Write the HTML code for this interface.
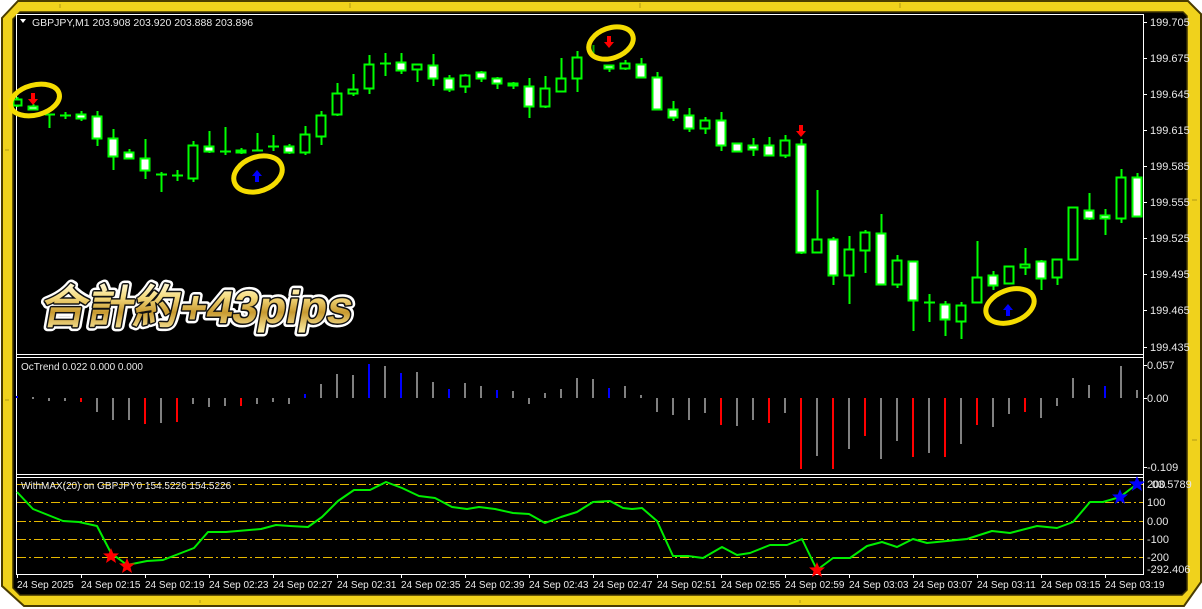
<!DOCTYPE html>
<html><head><meta charset="utf-8"><style>
html,body{margin:0;padding:0;background:#fff;}
svg{display:block;}
text{font-family:"Liberation Sans",sans-serif;}
</style></head><body>
<svg width="1202" height="609" viewBox="0 0 1202 609" xmlns="http://www.w3.org/2000/svg">
<defs>
<linearGradient id="gold" x1="0" y1="0" x2="0" y2="1">
<stop offset="0" stop-color="#fffbe0"/><stop offset="0.3" stop-color="#f6dc80"/><stop offset="0.6" stop-color="#c89a30"/><stop offset="1" stop-color="#fff0a8"/>
</linearGradient>
<path id="star" d="M0,-8 L2.2,-2.6 8,-2.5 3.5,1.2 5,7 0,3.6 -5,7 -3.5,1.2 -8,-2.5 -2.2,-2.6Z"/>
</defs>
<polygon points="18,1 1188,1 1201,14 1201,582 1184,606 24,606 2,586 2,18" fill="#f0d21c" stroke="#4a3c00" stroke-width="2"/>
<polygon points="20,12 1183,12 1187,16 1187,590 1182,595 20,595 13,588 13,19" fill="#000" stroke="#3a3000" stroke-width="1.5"/>
<g stroke="#8a7410" stroke-width="1" opacity="0.6">
<line x1="60" y1="4" x2="60" y2="8"/><line x1="350" y1="3" x2="350" y2="8"/><line x1="640" y1="3" x2="640" y2="8"/><line x1="900" y1="3" x2="900" y2="8"/>
<line x1="5" y1="150" x2="9" y2="150"/><line x1="5" y1="400" x2="9" y2="400"/><line x1="1192" y1="200" x2="1197" y2="200"/><line x1="1192" y1="440" x2="1197" y2="440"/>
<line x1="200" y1="600" x2="200" y2="603"/><line x1="800" y1="600" x2="800" y2="603"/>
</g>
<g stroke="#fff" stroke-width="1" fill="none" shape-rendering="crispEdges">
<polyline points="16.5,14.5 1143.5,14.5 1143.5,574.5 16.5,574.5 16.5,14.5"/>
<line x1="16" y1="354.5" x2="1144" y2="354.5"/><line x1="16" y1="357.5" x2="1144" y2="357.5"/>
<line x1="16" y1="474.5" x2="1144" y2="474.5"/><line x1="16" y1="477.5" x2="1144" y2="477.5"/>
</g>
<g stroke="#fff" stroke-width="1" shape-rendering="crispEdges">
<line x1="1143" y1="22.5" x2="1147" y2="22.5"/><line x1="1143" y1="58.5" x2="1147" y2="58.5"/><line x1="1143" y1="94.5" x2="1147" y2="94.5"/><line x1="1143" y1="130.5" x2="1147" y2="130.5"/><line x1="1143" y1="166.5" x2="1147" y2="166.5"/><line x1="1143" y1="202.5" x2="1147" y2="202.5"/><line x1="1143" y1="238.5" x2="1147" y2="238.5"/><line x1="1143" y1="274.5" x2="1147" y2="274.5"/><line x1="1143" y1="310.5" x2="1147" y2="310.5"/><line x1="1143" y1="347.5" x2="1147" y2="347.5"/>
<line x1="1143" y1="365.5" x2="1147" y2="365.5"/><line x1="1143" y1="398.5" x2="1147" y2="398.5"/><line x1="1143" y1="467.5" x2="1147" y2="467.5"/>
</g>
<g fill="#e8e8e8" font-size="11">
<text x="1150" y="26">199.705</text><text x="1150" y="62">199.675</text><text x="1150" y="98">199.645</text><text x="1150" y="134">199.615</text><text x="1150" y="170">199.585</text><text x="1150" y="206">199.555</text><text x="1150" y="242">199.525</text><text x="1150" y="278">199.495</text><text x="1150" y="314">199.465</text><text x="1150" y="351">199.435</text>
<text x="1147" y="369">0.057</text><text x="1147" y="402">0.00</text><text x="1147" y="471">-0.109</text>
<text x="1147" y="488">200</text><text x="1152" y="488">03.5789</text><text x="1147" y="506">100</text><text x="1147" y="525">0.00</text><text x="1147" y="543">-100</text><text x="1147" y="561">-200</text><text x="1147" y="573">-292.406</text>
</g>
<polygon points="20,19 26,19 23,23" fill="#fff"/>
<text x="32" y="26" fill="#e8e8e8" font-size="10.5">GBPJPY,M1  203.908 203.920 203.888 203.896</text>
<text x="21" y="370" fill="#e8e8e8" font-size="10">OcTrend 0.022 0.000 0.000</text>
<g stroke="#00ff00" stroke-width="1.6" shape-rendering="crispEdges">
<line x1="17.5" y1="97" x2="17.5" y2="107"/><rect x="13.5" y="99.5" width="8" height="6" fill="#000"/>
<line x1="33.5" y1="104" x2="33.5" y2="110"/><rect x="28.5" y="106.5" width="9" height="3" fill="#fff"/>
<line x1="49.5" y1="114" x2="49.5" y2="128"/><line x1="45" y1="114.5" x2="55" y2="114.5"/>
<line x1="65.5" y1="112" x2="65.5" y2="119"/><line x1="60" y1="115.5" x2="71" y2="115.5"/>
<line x1="81.5" y1="111" x2="81.5" y2="121"/><rect x="76.5" y="114.5" width="9" height="4" fill="#fff"/>
<line x1="97.5" y1="111" x2="97.5" y2="146"/><rect x="92.5" y="116.5" width="9" height="22" fill="#fff"/>
<line x1="113.5" y1="129" x2="113.5" y2="170"/><rect x="108.5" y="138.5" width="9" height="18" fill="#fff"/>
<line x1="129.5" y1="149" x2="129.5" y2="159"/><rect x="124.5" y="152.5" width="9" height="6" fill="#fff"/>
<line x1="145.5" y1="139" x2="145.5" y2="179"/><rect x="140.5" y="158.5" width="9" height="12" fill="#fff"/>
<line x1="161.5" y1="172" x2="161.5" y2="192"/><line x1="156" y1="174.5" x2="167" y2="174.5"/>
<line x1="177.5" y1="170" x2="177.5" y2="181"/><line x1="172" y1="175.5" x2="183" y2="175.5"/>
<line x1="193.5" y1="141" x2="193.5" y2="182"/><rect x="188.5" y="145.5" width="9" height="33" fill="#000"/>
<line x1="209.5" y1="131" x2="209.5" y2="153"/><rect x="204.5" y="146.5" width="9" height="5" fill="#fff"/>
<line x1="225.5" y1="127" x2="225.5" y2="155"/><line x1="220" y1="151.5" x2="231" y2="151.5"/>
<line x1="241.5" y1="148" x2="241.5" y2="154"/><rect x="236.5" y="150.5" width="9" height="2" fill="#fff"/>
<line x1="257.5" y1="133" x2="257.5" y2="151"/><line x1="252" y1="150.5" x2="263" y2="150.5"/>
<line x1="273.5" y1="135" x2="273.5" y2="151"/><line x1="268" y1="146.5" x2="279" y2="146.5"/>
<line x1="289.5" y1="144" x2="289.5" y2="154"/><rect x="284.5" y="146.5" width="9" height="6" fill="#fff"/>
<line x1="305.5" y1="126" x2="305.5" y2="155"/><rect x="300.5" y="134.5" width="9" height="18" fill="#000"/>
<line x1="321.5" y1="111" x2="321.5" y2="145"/><rect x="316.5" y="115.5" width="9" height="21" fill="#000"/>
<line x1="337.5" y1="83" x2="337.5" y2="116"/><rect x="332.5" y="93.5" width="9" height="21" fill="#000"/>
<line x1="353.5" y1="74" x2="353.5" y2="96"/><rect x="348.5" y="89.5" width="9" height="4" fill="#000"/>
<line x1="369.5" y1="55" x2="369.5" y2="94"/><rect x="364.5" y="64.5" width="9" height="24" fill="#000"/>
<line x1="385.5" y1="53" x2="385.5" y2="76"/><line x1="380" y1="63.5" x2="391" y2="63.5"/>
<line x1="401.5" y1="53" x2="401.5" y2="74"/><rect x="396.5" y="62.5" width="9" height="8" fill="#fff"/>
<line x1="417.5" y1="64" x2="417.5" y2="82"/><rect x="412.5" y="64.5" width="9" height="5" fill="#000"/>
<line x1="433.5" y1="54" x2="433.5" y2="86"/><rect x="428.5" y="65.5" width="9" height="13" fill="#fff"/>
<line x1="449.5" y1="75" x2="449.5" y2="92"/><rect x="444.5" y="78.5" width="9" height="11" fill="#fff"/>
<line x1="465.5" y1="74" x2="465.5" y2="93"/><rect x="460.5" y="75.5" width="9" height="11" fill="#000"/>
<line x1="481.5" y1="71" x2="481.5" y2="82"/><rect x="476.5" y="72.5" width="9" height="6" fill="#fff"/>
<line x1="497.5" y1="77" x2="497.5" y2="89"/><rect x="492.5" y="78.5" width="9" height="5" fill="#fff"/>
<line x1="513.5" y1="82" x2="513.5" y2="89"/><rect x="508.5" y="83.5" width="9" height="2" fill="#fff"/>
<line x1="529.5" y1="78" x2="529.5" y2="118"/><rect x="524.5" y="86.5" width="9" height="20" fill="#fff"/>
<line x1="545.5" y1="76" x2="545.5" y2="108"/><rect x="540.5" y="88.5" width="9" height="18" fill="#000"/>
<line x1="561.5" y1="58" x2="561.5" y2="91"/><rect x="556.5" y="78.5" width="9" height="13" fill="#000"/>
<line x1="577.5" y1="51" x2="577.5" y2="92"/><rect x="572.5" y="57.5" width="9" height="21" fill="#000"/>
<line x1="593.5" y1="45" x2="593.5" y2="56" stroke="#0a0"/>
<line x1="609.5" y1="65" x2="609.5" y2="72"/><rect x="604.5" y="65.5" width="9" height="3" fill="#fff"/>
<line x1="625.5" y1="60" x2="625.5" y2="70"/><rect x="620.5" y="63.5" width="9" height="5" fill="#000"/>
<line x1="641.5" y1="58" x2="641.5" y2="77"/><rect x="636.5" y="64.5" width="9" height="13" fill="#fff"/>
<line x1="657.5" y1="72" x2="657.5" y2="110"/><rect x="652.5" y="77.5" width="9" height="32" fill="#fff"/>
<line x1="673.5" y1="101" x2="673.5" y2="121"/><rect x="668.5" y="109.5" width="9" height="8" fill="#fff"/>
<line x1="689.5" y1="108" x2="689.5" y2="132"/><rect x="684.5" y="115.5" width="9" height="13" fill="#fff"/>
<line x1="705.5" y1="117" x2="705.5" y2="134"/><rect x="700.5" y="120.5" width="9" height="8" fill="#000"/>
<line x1="721.5" y1="112" x2="721.5" y2="151"/><rect x="716.5" y="120.5" width="9" height="25" fill="#fff"/>
<line x1="737.5" y1="143" x2="737.5" y2="151"/><rect x="732.5" y="143.5" width="9" height="8" fill="#fff"/>
<line x1="753.5" y1="138" x2="753.5" y2="156"/><rect x="748.5" y="145.5" width="9" height="4" fill="#fff"/>
<line x1="769.5" y1="137" x2="769.5" y2="155"/><rect x="764.5" y="145.5" width="9" height="10" fill="#fff"/>
<line x1="785.5" y1="135" x2="785.5" y2="158"/><rect x="780.5" y="140.5" width="9" height="15" fill="#000"/>
<line x1="801.5" y1="139" x2="801.5" y2="254"/><rect x="796.5" y="144.5" width="9" height="108" fill="#fff"/>
<line x1="817.5" y1="190" x2="817.5" y2="252"/><rect x="812.5" y="239.5" width="9" height="13" fill="#000"/>
<line x1="833.5" y1="237" x2="833.5" y2="285"/><rect x="828.5" y="239.5" width="9" height="36" fill="#fff"/>
<line x1="849.5" y1="236" x2="849.5" y2="304"/><rect x="844.5" y="249.5" width="9" height="26" fill="#000"/>
<line x1="865.5" y1="230" x2="865.5" y2="273"/><rect x="860.5" y="232.5" width="9" height="18" fill="#000"/>
<line x1="881.5" y1="214" x2="881.5" y2="284"/><rect x="876.5" y="233.5" width="9" height="51" fill="#fff"/>
<line x1="897.5" y1="255" x2="897.5" y2="288"/><rect x="892.5" y="260.5" width="9" height="24" fill="#000"/>
<line x1="913.5" y1="261" x2="913.5" y2="331"/><rect x="908.5" y="261.5" width="9" height="39" fill="#fff"/>
<line x1="929.5" y1="294" x2="929.5" y2="322"/><line x1="924" y1="302.5" x2="935" y2="302.5"/>
<line x1="945.5" y1="301" x2="945.5" y2="336"/><rect x="940.5" y="304.5" width="9" height="15" fill="#fff"/>
<line x1="961.5" y1="302" x2="961.5" y2="339"/><rect x="956.5" y="305.5" width="9" height="16" fill="#000"/>
<line x1="977.5" y1="241" x2="977.5" y2="302"/><rect x="972.5" y="277.5" width="9" height="25" fill="#000"/>
<line x1="993.5" y1="271" x2="993.5" y2="290"/><rect x="988.5" y="275.5" width="9" height="10" fill="#fff"/>
<line x1="1009.5" y1="266" x2="1009.5" y2="284"/><rect x="1004.5" y="266.5" width="9" height="17" fill="#000"/>
<line x1="1025.5" y1="248" x2="1025.5" y2="275"/><rect x="1020.5" y="264.5" width="9" height="3" fill="#000"/>
<line x1="1041.5" y1="260" x2="1041.5" y2="290"/><rect x="1036.5" y="261.5" width="9" height="17" fill="#fff"/>
<line x1="1057.5" y1="259" x2="1057.5" y2="285"/><rect x="1052.5" y="259.5" width="9" height="18" fill="#000"/>
<line x1="1073.5" y1="207" x2="1073.5" y2="260"/><rect x="1068.5" y="207.5" width="9" height="52" fill="#000"/>
<line x1="1089.5" y1="193" x2="1089.5" y2="220"/><rect x="1084.5" y="210.5" width="9" height="8" fill="#fff"/>
<line x1="1105.5" y1="209" x2="1105.5" y2="235"/><rect x="1100.5" y="215.5" width="9" height="3" fill="#fff"/>
<line x1="1121.5" y1="169" x2="1121.5" y2="223"/><rect x="1116.5" y="177.5" width="9" height="41" fill="#000"/>
<line x1="1137.5" y1="173" x2="1137.5" y2="216"/><rect x="1132.5" y="177.5" width="9" height="39" fill="#fff"/>
</g>
<g fill="#ff0000">
<path d="M31,93 h4 v6 h3 l-5,6 l-5,-6 h3z"/>
<path d="M607,36 h4 v6 h3 l-5,6 l-5,-6 h3z"/>
<path d="M799,125 h4 v6 h3 l-5,6 l-5,-6 h3z"/>
</g>
<g fill="#0000ff">
<path d="M255,182 h4 v-6 h3 l-5,-6 l-5,6 h3z"/>
<path d="M1006,316 h4 v-6 h3 l-5,-6 l-5,6 h3z"/>
</g>
<g fill="none" stroke="#f5dc00" stroke-width="5">
<ellipse cx="35" cy="100" rx="25" ry="15" transform="rotate(-15 35 100)"/>
<ellipse cx="258" cy="174" rx="25" ry="17" transform="rotate(-20 258 174)"/>
<ellipse cx="611" cy="43" rx="23" ry="15" transform="rotate(-20 611 43)"/>
<ellipse cx="1010" cy="306" rx="25" ry="16" transform="rotate(-20 1010 306)"/>
</g>
<g transform="translate(40,323) skewX(-10)">
<text x="0" y="0" font-family="'Liberation Serif','Noto Serif CJK SC',serif" font-weight="bold" font-size="46" fill="none" stroke="#fff" stroke-width="8" stroke-linejoin="round">合計約+43pips</text>
<text x="0" y="0" font-family="'Liberation Serif','Noto Serif CJK SC',serif" font-weight="bold" font-size="46" fill="none" stroke="#111" stroke-width="3" stroke-linejoin="round">合計約+43pips</text>
<text x="0" y="0" font-family="'Liberation Serif','Noto Serif CJK SC',serif" font-weight="bold" font-size="46" fill="url(#gold)">合計約+43pips</text>
</g>
<g shape-rendering="crispEdges">
<g fill="#808080">
<rect x="32" y="397" width="2" height="2"/><rect x="48" y="398" width="2" height="3"/><rect x="64" y="398" width="2" height="3"/>
<rect x="96" y="398" width="2" height="14"/><rect x="112" y="398" width="2" height="22"/><rect x="128" y="398" width="2" height="22"/><rect x="160" y="398" width="2" height="25"/>
<rect x="192" y="398" width="2" height="6"/><rect x="208" y="398" width="2" height="9"/><rect x="224" y="398" width="2" height="8"/><rect x="256" y="398" width="2" height="6"/><rect x="272" y="398" width="2" height="4"/><rect x="288" y="398" width="2" height="6"/>
<rect x="320" y="384" width="2" height="14"/><rect x="336" y="374" width="2" height="24"/><rect x="352" y="375" width="2" height="23"/><rect x="384" y="366" width="2" height="32"/><rect x="416" y="372" width="2" height="26"/><rect x="432" y="382" width="2" height="16"/><rect x="464" y="383" width="2" height="15"/><rect x="480" y="386" width="2" height="12"/><rect x="512" y="391" width="2" height="7"/><rect x="528" y="398" width="2" height="6"/><rect x="544" y="393" width="2" height="5"/><rect x="560" y="389" width="2" height="9"/><rect x="576" y="378" width="2" height="20"/><rect x="592" y="379" width="2" height="19"/>
<rect x="624" y="386" width="2" height="12"/><rect x="640" y="395" width="2" height="3"/><rect x="656" y="398" width="2" height="14"/><rect x="672" y="398" width="2" height="17"/><rect x="688" y="398" width="2" height="22"/><rect x="704" y="398" width="2" height="15"/><rect x="736" y="398" width="2" height="28"/><rect x="752" y="398" width="2" height="22"/><rect x="784" y="398" width="2" height="15"/>
<rect x="816" y="398" width="2" height="58"/><rect x="848" y="398" width="2" height="51"/><rect x="880" y="398" width="2" height="61"/><rect x="896" y="398" width="2" height="43"/><rect x="928" y="398" width="2" height="55"/><rect x="960" y="398" width="2" height="46"/><rect x="992" y="398" width="2" height="29"/><rect x="1008" y="398" width="2" height="16"/><rect x="1040" y="398" width="2" height="20"/><rect x="1056" y="398" width="2" height="8"/>
<rect x="1072" y="378" width="2" height="20"/><rect x="1088" y="385" width="2" height="13"/><rect x="1120" y="366" width="2" height="32"/><rect x="1136" y="390" width="2" height="8"/>
</g>
<g fill="#ff0000">
<rect x="80" y="398" width="2" height="4"/><rect x="144" y="398" width="2" height="26"/><rect x="176" y="398" width="2" height="24"/><rect x="240" y="398" width="2" height="8"/>
<rect x="720" y="398" width="2" height="27"/><rect x="768" y="398" width="2" height="25"/><rect x="800" y="398" width="2" height="71"/><rect x="832" y="398" width="2" height="71"/><rect x="864" y="398" width="2" height="38"/><rect x="912" y="398" width="2" height="59"/><rect x="944" y="398" width="2" height="59"/><rect x="976" y="398" width="2" height="27"/><rect x="1024" y="398" width="2" height="14"/>
</g>
<g fill="#0000ff">
<rect x="16" y="396" width="2" height="2"/><rect x="304" y="394" width="2" height="4"/><rect x="368" y="364" width="2" height="34"/><rect x="400" y="373" width="2" height="25"/><rect x="448" y="389" width="2" height="9"/><rect x="496" y="390" width="2" height="8"/><rect x="608" y="388" width="2" height="10"/><rect x="1104" y="386" width="2" height="12"/>
</g>
</g>
<g stroke="#e6b800" stroke-width="1" stroke-dasharray="9,3,2,3" shape-rendering="crispEdges">
<line x1="17" y1="484.5" x2="1143" y2="484.5"/><line x1="17" y1="502.5" x2="1143" y2="502.5"/><line x1="17" y1="521.5" x2="1143" y2="521.5"/><line x1="17" y1="539.5" x2="1143" y2="539.5"/><line x1="17" y1="557.5" x2="1143" y2="557.5"/>
</g>
<text x="21" y="489" fill="#e8e8e8" font-size="10">WithMAX(20) on GBPJPY0 154.5226 154.5226</text>
<polyline fill="none" stroke="#00ee00" stroke-width="2" stroke-linejoin="round" points="17,492 33,509 63,521 79,522 97,526 111,553 127,565 147,561 163,560 194,548 208,532 226,532 261,529 276,525 290,526 308,527 322,517 338,501 354,490 370,490 386,482 402,488 419,496 435,498 452,507 467,509 479,507 495,509 513,513 529,514 545,523 561,517 577,512 593,502 610,501 623,508 632,509 642,508 657,521 673,556 688,556 703,558 722,547 737,555 750,553 770,545 787,545 802,539 817,570 833,558 850,558 867,546 882,542 897,547 913,539 927,543 947,541 967,539 992,531 1010,533 1037,526 1057,528 1073,522 1090,502 1103,502 1120,497 1137,484"/>
<g fill="#ff0000"><use href="#star" x="111" y="556"/><use href="#star" x="127" y="566"/><use href="#star" x="817" y="570"/></g>
<g fill="#0000ff"><use href="#star" x="1120" y="497"/><use href="#star" x="1137" y="484"/></g>
<g stroke="#fff" stroke-width="1" shape-rendering="crispEdges">
<line x1="17.5" y1="574" x2="17.5" y2="578"/><line x1="81.5" y1="574" x2="81.5" y2="578"/><line x1="145.5" y1="574" x2="145.5" y2="578"/><line x1="209.5" y1="574" x2="209.5" y2="578"/><line x1="273.5" y1="574" x2="273.5" y2="578"/><line x1="337.5" y1="574" x2="337.5" y2="578"/><line x1="401.5" y1="574" x2="401.5" y2="578"/><line x1="465.5" y1="574" x2="465.5" y2="578"/><line x1="529.5" y1="574" x2="529.5" y2="578"/><line x1="593.5" y1="574" x2="593.5" y2="578"/><line x1="657.5" y1="574" x2="657.5" y2="578"/><line x1="721.5" y1="574" x2="721.5" y2="578"/><line x1="785.5" y1="574" x2="785.5" y2="578"/><line x1="849.5" y1="574" x2="849.5" y2="578"/><line x1="913.5" y1="574" x2="913.5" y2="578"/><line x1="977.5" y1="574" x2="977.5" y2="578"/><line x1="1041.5" y1="574" x2="1041.5" y2="578"/><line x1="1105.5" y1="574" x2="1105.5" y2="578"/>
</g>
<g fill="#e8e8e8" font-size="10">
<text x="17" y="588">24 Sep 2025</text><text x="81" y="588">24 Sep 02:15</text><text x="145" y="588">24 Sep 02:19</text><text x="209" y="588">24 Sep 02:23</text><text x="273" y="588">24 Sep 02:27</text><text x="337" y="588">24 Sep 02:31</text><text x="401" y="588">24 Sep 02:35</text><text x="465" y="588">24 Sep 02:39</text><text x="529" y="588">24 Sep 02:43</text><text x="593" y="588">24 Sep 02:47</text><text x="657" y="588">24 Sep 02:51</text><text x="721" y="588">24 Sep 02:55</text><text x="785" y="588">24 Sep 02:59</text><text x="849" y="588">24 Sep 03:03</text><text x="913" y="588">24 Sep 03:07</text><text x="977" y="588">24 Sep 03:11</text><text x="1041" y="588">24 Sep 03:15</text><text x="1105" y="588">24 Sep 03:19</text>
</g>
</svg>
</body></html>
